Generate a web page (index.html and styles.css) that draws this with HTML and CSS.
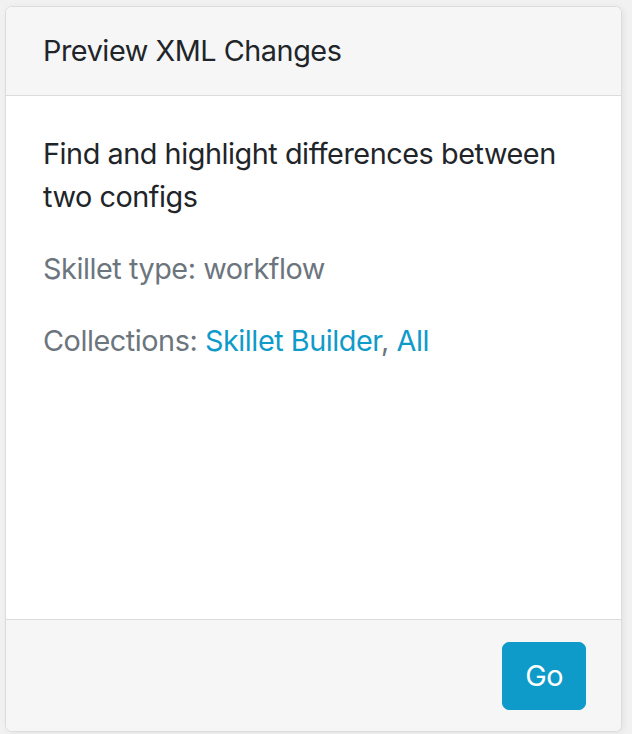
FILE: index.html
```html
<!DOCTYPE html>
<html lang="en">
<head>
<meta charset="utf-8">
<title>Preview XML Changes</title>
<link rel="stylesheet" href="styles.css">
</head>
<body>
<div class="card">
  <div class="card-header">Preview XML Changes</div>
  <div class="card-body">
    <p class="desc">Find and highlight differences between two configs</p>
    <p class="muted">Skillet type: workflow</p>
    <p class="muted">Collections: <a href="#">Skillet Builder</a>, <a href="#">All</a></p>
  </div>
  <div class="card-footer">
    <button class="btn">Go</button>
  </div>
</div>
</body>
</html>
```
FILE: styles.css
```css
html, body {
  margin: 0;
  padding: 0;
  height: 100%;
}
body {
  background: #f1f1f2;
  font-family: Inter, "Noto Sans", sans-serif;
  font-size: 28.8px;
  line-height: 43.2px;
  letter-spacing: -0.45px;
  color: #212529;
  padding: 6px 10px 2px 5px;
  box-sizing: border-box;
}
.card {
  height: 100%;
  box-sizing: border-box;
  display: flex;
  flex-direction: column;
  background: #fff;
  border: 1px solid #dcdcdd;
  border-radius: 7px;
  box-shadow: 2px 1px 6px rgba(0, 0, 0, 0.06);
  overflow: hidden;
}
.card-header {
  background: #f6f6f6;
  border-bottom: 1px solid #dcdcdd;
  padding: 22px 36px 22.4px 37px;
}
.card-body {
  flex: 1;
  padding: 36.5px 36px 0 37px;
}
.card-body p {
  margin: 0 0 28.8px;
}
.muted {
  color: #6c757d;
}
.card-body a {
  color: #0f9bca;
  text-decoration: none;
}
.card-footer {
  background: #f6f6f6;
  border-top: 1px solid #dcdcdd;
  padding: 22.5px 35px 21.5px;
  display: flex;
  justify-content: flex-end;
}
.btn {
  font-family: inherit;
  font-size: 28.8px;
  line-height: 43.2px;
  letter-spacing: -0.45px;
  color: #fff;
  background: #0f9bca;
  border: 1px solid #0f9bca;
  border-radius: 7px;
  padding: 11px 22px;
  cursor: pointer;
}
```
